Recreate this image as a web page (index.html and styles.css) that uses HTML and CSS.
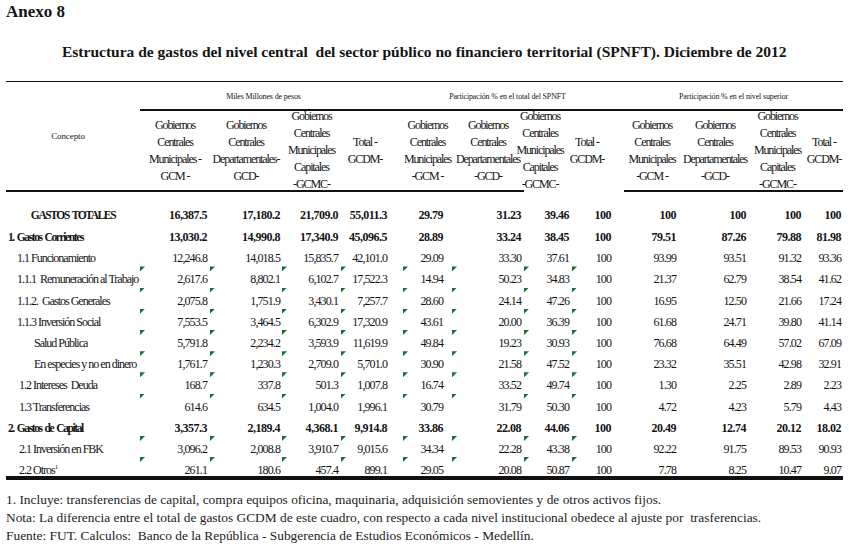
FILE: index.html
```html
<!DOCTYPE html>
<html lang="es">
<head>
<meta charset="utf-8">
<title>Anexo 8</title>
<link rel="stylesheet" href="styles.css">
</head>
<body>
<div class="page">
  <h1 class="annex">Anexo 8</h1>
  <h2 class="title">Estructura de gastos del nivel central&nbsp; del sector público no financiero territorial (SPNFT). Diciembre de 2012</h2>
  <div class="table">
    <div class="head">
      <div class="concept">Concepto</div>
      <div class="grp g1">Miles Millones de pesos</div>
      <div class="grp g2">Participación % en el total del SPNFT</div>
      <div class="grp g3">Participación % en el nivel superior</div>
      <div class="ch">Gobiernos<br>Centrales<br>Municipales -<br>GCM -</div>
      <div class="ch">Gobiernos<br>Centrales<br>Departamentales-<br>GCD-</div>
      <div class="ch">Gobiernos<br>Centrales<br>Municipales<br>Capitales<br>-GCMC-</div>
      <div class="ch tot1">Total -<br>GCDM-</div>
      <div class="ch">Gobiernos<br>Centrales<br>Municipales<br>-GCM -</div>
      <div class="ch">Gobiernos<br>Centrales<br>Departamentales<br>-GCD-</div>
      <div class="ch c7 nb">Gobiernos<br>Centrales<br>Municipales<br>Capitales<br>-GCMC-</div>
      <div class="ch tot2 nb">Total -<br>GCDM-</div>
      <div class="ch">Gobiernos<br>Centrales<br>Municipales<br>-GCM -</div>
      <div class="ch">Gobiernos<br>Centrales<br>Departamentales<br>-GCD-</div>
      <div class="ch">Gobiernos<br>Centrales<br>Municipales<br>Capitales<br>-GCMC-</div>
      <div class="ch">Total -<br>GCDM-</div>
    </div>
    <div class="body">
      <div class="row b first"><div class="lab c">GASTOS TOTALES</div><div>16,387.5</div><div>17,180.2</div><div>21,709.0</div><div>55,011.3</div><div>29.79</div><div>31.23</div><div>39.46</div><div>100</div><div>100</div><div>100</div><div>100</div><div>100</div></div>
      <div class="row b"><div class="lab l0">1. Gastos Corrientes</div><div>13,030.2</div><div>14,990.8</div><div>17,340.9</div><div>45,096.5</div><div>28.89</div><div>33.24</div><div>38.45</div><div>100</div><div>79.51</div><div>87.26</div><div>79.88</div><div>81.98</div></div>
      <div class="row"><div class="lab l1">1.1 Funcionamiento</div><div>12,246.8</div><div>14,018.5</div><div>15,835.7</div><div>42,101.0</div><div>29.09</div><div>33.30</div><div>37.61</div><div>100</div><div>93.99</div><div>93.51</div><div>91.32</div><div>93.36</div></div>
      <div class="row t"><div class="lab l1">1.1.1  Remuneración al Trabajo</div><div>2,617.6</div><div>8,802.1</div><div>6,102.7</div><div>17,522.3</div><div>14.94</div><div>50.23</div><div>34.83</div><div>100</div><div>21.37</div><div>62.79</div><div>38.54</div><div>41.62</div></div>
      <div class="row t"><div class="lab l1">1.1.2.  Gastos Generales</div><div>2,075.8</div><div>1,751.9</div><div>3,430.1</div><div>7,257.7</div><div>28.60</div><div>24.14</div><div>47.26</div><div>100</div><div>16.95</div><div>12.50</div><div>21.66</div><div>17.24</div></div>
      <div class="row t"><div class="lab l1">1.1.3 Inversión Social</div><div>7,553.5</div><div>3,464.5</div><div>6,302.9</div><div>17,320.9</div><div>43.61</div><div>20.00</div><div>36.39</div><div>100</div><div>61.68</div><div>24.71</div><div>39.80</div><div>41.14</div></div>
      <div class="row t"><div class="lab l2">Salud Pública</div><div>5,791.8</div><div>2,234.2</div><div>3,593.9</div><div>11,619.9</div><div>49.84</div><div>19.23</div><div>30.93</div><div>100</div><div>76.68</div><div>64.49</div><div>57.02</div><div>67.09</div></div>
      <div class="row t"><div class="lab l2">En especies y no en dinero</div><div>1,761.7</div><div>1,230.3</div><div>2,709.0</div><div>5,701.0</div><div>30.90</div><div>21.58</div><div>47.52</div><div>100</div><div>23.32</div><div>35.51</div><div>42.98</div><div>32.91</div></div>
      <div class="row t"><div class="lab l1b">1.2 Intereses  Deuda</div><div>168.7</div><div>337.8</div><div>501.3</div><div>1,007.8</div><div>16.74</div><div>33.52</div><div>49.74</div><div>100</div><div>1.30</div><div>2.25</div><div>2.89</div><div>2.23</div></div>
      <div class="row t"><div class="lab l1b">1.3 Transferencias</div><div>614.6</div><div>634.5</div><div>1,004.0</div><div>1,996.1</div><div>30.79</div><div>31.79</div><div>50.30</div><div>100</div><div>4.72</div><div>4.23</div><div>5.79</div><div>4.43</div></div>
      <div class="row b"><div class="lab l0">2. Gastos de Capital</div><div>3,357.3</div><div>2,189.4</div><div>4,368.1</div><div>9,914.8</div><div>33.86</div><div>22.08</div><div>44.06</div><div>100</div><div>20.49</div><div>12.74</div><div>20.12</div><div>18.02</div></div>
      <div class="row t"><div class="lab l1b">2.1 Inversión en FBK</div><div>3,096.2</div><div>2,008.8</div><div>3,910.7</div><div>9,015.6</div><div>34.34</div><div>22.28</div><div>43.38</div><div>100</div><div>92.22</div><div>91.75</div><div>89.53</div><div>90.93</div></div>
      <div class="row t last"><div class="lab l1b">2.2 Otros<sup>1</sup></div><div>261.1</div><div>180.6</div><div>457.4</div><div>899.1</div><div>29.05</div><div>20.08</div><div>50.87</div><div>100</div><div>7.78</div><div>8.25</div><div>10.47</div><div>9.07</div></div>
    </div>
  </div>
  <div class="notes">
    <p>1. Incluye: transferencias de capital, compra equipos oficina, maquinaria, adquisición semovientes y de otros activos fijos.</p>
    <p>Nota: La diferencia entre el total de gastos GCDM de este cuadro, con respecto a cada nivel institucional obedece al ajuste por&nbsp; trasferencias.</p>
    <p>Fuente: FUT. Calculos:&nbsp; Banco de la República - Subgerencia de Estudios Económicos - Medellín.</p>
  </div>
</div>
</body>
</html>
```

FILE: styles.css
```css
* { box-sizing: border-box; margin: 0; padding: 0; }
html, body { background: #fff; }
body {
  font-family: "Liberation Serif", "Times New Roman", serif;
  color: #141414;
  overflow: hidden;
}
.page { width: 849px; height: 547px; padding: 0 6px; }

.annex {
  font-size: 17px;
  font-weight: bold;
  line-height: 24px;
  letter-spacing: 0;
}
.title {
  font-size: 15.5px;
  font-weight: bold;
  line-height: 20px;
  margin-top: 18px;
  padding-left: 56px;
  white-space: nowrap;
}

.table { width: 837px; margin-top: 19px; }

.head, .row {
  display: grid;
  grid-template-columns: 134px 70px 72px 59px 62px 49px 72px 48px 52px 56px 70px 55px 38px;
}

.head {
  grid-template-rows: 29px 81px;
  border-top: 1px solid #111;
}
.concept {
  grid-row: 1 / 3;
  display: flex;
  align-items: center;
  justify-content: center;
  padding-right: 10px;
  border-bottom: 2px solid #111;
  font-size: 9px;
  letter-spacing: -0.1px;
}
.grp {
  grid-column: span 4;
  border-bottom: 2px solid #111;
  font-size: 8px;
  letter-spacing: -0.15px;
  line-height: 24px;
  padding-top: 3px;
  text-align: center;
  white-space: nowrap;
}
.g1 { padding-right: 16px; }
.g2 { padding-right: 12px; }

.ch {
  display: flex;
  align-items: center;
  justify-content: center;
  text-align: center;
  border-bottom: 2px solid #111;
  font-size: 12px;
  letter-spacing: -1.1px;
  line-height: 17px;
  white-space: nowrap;
}
.ch.nb { border-bottom-color: transparent; }
.ch.tot1 { padding-right: 14px; }
.ch.c7 { padding-right: 16px; }
.ch.tot2 { padding-right: 22px; }

.body {
  margin-top: 10px;
  border-bottom: 4px solid #111;
}
.row {
  height: 21.2px;
  font-size: 12px;
  line-height: 16.2px;
  letter-spacing: -0.9px;
}
.row.first { height: 22px; }
.row.last { height: 19px; }
.row > div {
  position: relative;
  padding-top: 5px;
  text-align: right;
  white-space: pre;
}
.row > .lab { text-align: left; letter-spacing: -1px; }
.row.b { font-weight: bold; letter-spacing: -0.5px; }
.row.b > .lab { font-size: 11.5px; letter-spacing: -1.4px; word-spacing: 1.5px; }
.lab.c { text-align: center; }
.lab.l0 { padding-left: 2px; }
.lab.l1 { padding-left: 11px; }
.lab.l1b { padding-left: 13px; }
.lab.l2 { padding-left: 28px; }
.lab sup { font-size: 7px; line-height: 0; vertical-align: 5px; letter-spacing: 0; }

.row > :nth-child(2) { padding-right: 3px; }
.row > :nth-child(3) { padding-right: 2px; }
.row > :nth-child(4) { padding-right: 3px; }
.row > :nth-child(5) { padding-right: 16px; }
.row > :nth-child(6) { padding-right: 9px; }
.row > :nth-child(7) { padding-right: 3px; }
.row > :nth-child(8) { padding-right: 3px; }
.row > :nth-child(9) { padding-right: 13px; }
.row > :nth-child(10) { padding-right: 4px; }
.row > :nth-child(11) { padding-right: 4px; }
.row > :nth-child(12) { padding-right: 4px; }
.row > :nth-child(13) { padding-right: 2px; }

.row.t > div:nth-child(n+2):nth-child(-n+9)::before {
  content: "";
  position: absolute;
  left: 0;
  top: 0;
  width: 5px;
  height: 5px;
  background: #15703a;
  clip-path: polygon(0 0, 100% 0, 0 100%);
}

.notes {
  margin-top: 11px;
  font-size: 13.4px;
  line-height: 18px;
  color: #222;
  white-space: nowrap;
}
```
